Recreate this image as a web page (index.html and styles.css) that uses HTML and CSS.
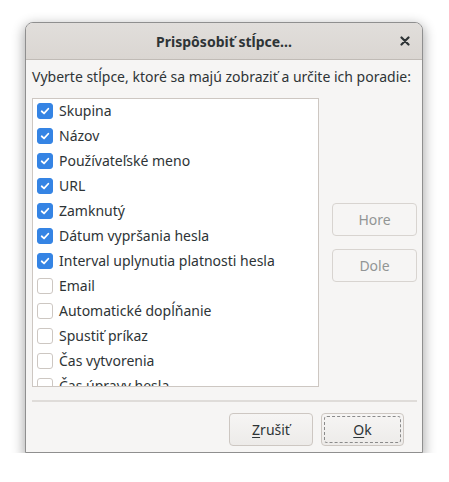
FILE: index.html
```html
<!DOCTYPE html>
<html>
<head>
<meta charset="utf-8">
<link rel="stylesheet" href="styles.css">
</head>
<body>
<div class="dialog">
  <div class="titlebar">
    <span class="title">Prispôsobiť stĺpce...</span>
    <span class="close"><svg width="10" height="10" viewBox="0 0 10 10"><path d="M1.5 1.5 L8.5 8.5 M8.5 1.5 L1.5 8.5" stroke="#2e3436" stroke-width="2.2" stroke-linecap="round"/></svg></span>
  </div>
  <div class="content">
    <div class="label">Vyberte stĺpce, ktoré sa majú zobraziť a určite ich poradie:</div>
    <div class="main">
      <div class="list">
        <div class="row"><span class="cb on"><svg viewBox="0 0 16 16"><path d="M4.2 8.3 L6.9 10.8 L11.8 5.4" fill="none" stroke="#fff" stroke-width="2" stroke-linecap="round" stroke-linejoin="round"/></svg></span>Skupina</div>
        <div class="row"><span class="cb on"><svg viewBox="0 0 16 16"><path d="M4.2 8.3 L6.9 10.8 L11.8 5.4" fill="none" stroke="#fff" stroke-width="2" stroke-linecap="round" stroke-linejoin="round"/></svg></span>Názov</div>
        <div class="row"><span class="cb on"><svg viewBox="0 0 16 16"><path d="M4.2 8.3 L6.9 10.8 L11.8 5.4" fill="none" stroke="#fff" stroke-width="2" stroke-linecap="round" stroke-linejoin="round"/></svg></span>Používateľské meno</div>
        <div class="row"><span class="cb on"><svg viewBox="0 0 16 16"><path d="M4.2 8.3 L6.9 10.8 L11.8 5.4" fill="none" stroke="#fff" stroke-width="2" stroke-linecap="round" stroke-linejoin="round"/></svg></span>URL</div>
        <div class="row"><span class="cb on"><svg viewBox="0 0 16 16"><path d="M4.2 8.3 L6.9 10.8 L11.8 5.4" fill="none" stroke="#fff" stroke-width="2" stroke-linecap="round" stroke-linejoin="round"/></svg></span>Zamknutý</div>
        <div class="row"><span class="cb on"><svg viewBox="0 0 16 16"><path d="M4.2 8.3 L6.9 10.8 L11.8 5.4" fill="none" stroke="#fff" stroke-width="2" stroke-linecap="round" stroke-linejoin="round"/></svg></span>Dátum vypršania hesla</div>
        <div class="row"><span class="cb on"><svg viewBox="0 0 16 16"><path d="M4.2 8.3 L6.9 10.8 L11.8 5.4" fill="none" stroke="#fff" stroke-width="2" stroke-linecap="round" stroke-linejoin="round"/></svg></span>Interval uplynutia platnosti hesla</div>
        <div class="row"><span class="cb"></span>Email</div>
        <div class="row"><span class="cb"></span>Automatické dopĺňanie</div>
        <div class="row"><span class="cb"></span>Spustiť príkaz</div>
        <div class="row"><span class="cb"></span>Čas vytvorenia</div>
        <div class="row"><span class="cb"></span>Čas úpravy hesla</div>
      </div>
      <div class="side">
        <button class="btn disabled">Hore</button>
        <button class="btn disabled">Dole</button>
      </div>
    </div>
    <div class="sep"></div>
    <div class="actions">
      <button class="btn act"><u>Z</u>rušiť</button>
      <button class="btn act focus"><span class="ring"><u>O</u>k</span></button>
    </div>
  </div>
</div>
</body>
</html>
```

FILE: styles.css
```css
html, body {
  margin: 0;
  padding: 0;
  background: #ffffff;
}
body {
  font-family: "Noto Sans", "DejaVu Sans", sans-serif;
  font-size: 14px;
  color: #2e3436;
}
.dialog {
  margin: 22px 0 0 25px;
  width: 398px;
  height: 431px;
  box-sizing: border-box;
  border: 1px solid #8f8f8f;
  border-radius: 8px 8px 0 0;
  background: #f6f5f4;
  box-shadow: 0 4px 12px 2px rgba(0,0,0,0.3);
  display: flex;
  flex-direction: column;
  overflow: hidden;
}
.titlebar {
  height: 36px;
  flex: none;
  background: linear-gradient(#e1dedb, #dad6d2);
  border-bottom: 1px solid #c0bbb6;
  display: flex;
  align-items: center;
  justify-content: center;
  position: relative;
}
.title {
  font-weight: bold;
  font-size: 14px;
}
.close {
  position: absolute;
  right: 12px;
  top: 13px;
  width: 10px;
  height: 10px;
  display: flex;
}
.content {
  flex: 1;
  display: flex;
  flex-direction: column;
  padding: 7px 5px 0 6px;
}
.label {
  height: 20px;
  line-height: 20px;
  margin-bottom: 11px;
  white-space: nowrap;
}
.main {
  display: flex;
  align-items: center;
  gap: 13px;
}
.list {
  width: 287px;
  height: 289px;
  box-sizing: border-box;
  border: 1px solid #cdc7c2;
  background: #ffffff;
  overflow: hidden;
  padding-top: 0;
}
.row {
  height: 25px;
  display: flex;
  align-items: center;
  padding-left: 4px;
  white-space: nowrap;
  line-height: 18px;
}
.row:first-child {
  margin-top: -1px;
}
.cb {
  width: 14px;
  height: 14px;
  border: 1px solid #cdc7c2;
  border-radius: 3px;
  background: #fff;
  margin-right: 6px;
  flex: none;
  display: flex;
}
.cb.on {
  background: #3584e4;
  border-color: #3584e4;
}
.cb svg {
  width: 14px;
  height: 14px;
}
.side {
  display: flex;
  flex-direction: column;
  gap: 13px;
}
.btn {
  font-family: inherit;
  font-size: 14px;
  color: #2e3436;
  height: 33px;
  box-sizing: border-box;
  border: 1px solid #cdc7c2;
  border-radius: 4px;
  background: linear-gradient(#f6f5f4, #edebe9);
  padding: 0;
  display: flex;
  align-items: center;
  justify-content: center;
}
.btn.disabled {
  width: 85px;
  color: #929595;
  background: #f6f5f4;
  border-color: #d8d4d0;
}
.sep {
  height: 2px;
  background: #dfdcd9;
  margin: 13px 0 0 0;
  width: 385px;
}
.actions {
  display: flex;
  justify-content: flex-end;
  gap: 8px;
  padding: 11px 13px 0 0;
}
.btn.act {
  width: 84px;
}
.btn.focus {
  width: 83px;
  padding: 2px;
}
.ring {
  width: 100%;
  height: 100%;
  box-sizing: border-box;
  border: 1px dashed #8a8a8a;
  border-radius: 3px;
  display: flex;
  align-items: center;
  justify-content: center;
}
u {
  text-decoration-thickness: 1px;
  text-underline-offset: 2px;
}
```
